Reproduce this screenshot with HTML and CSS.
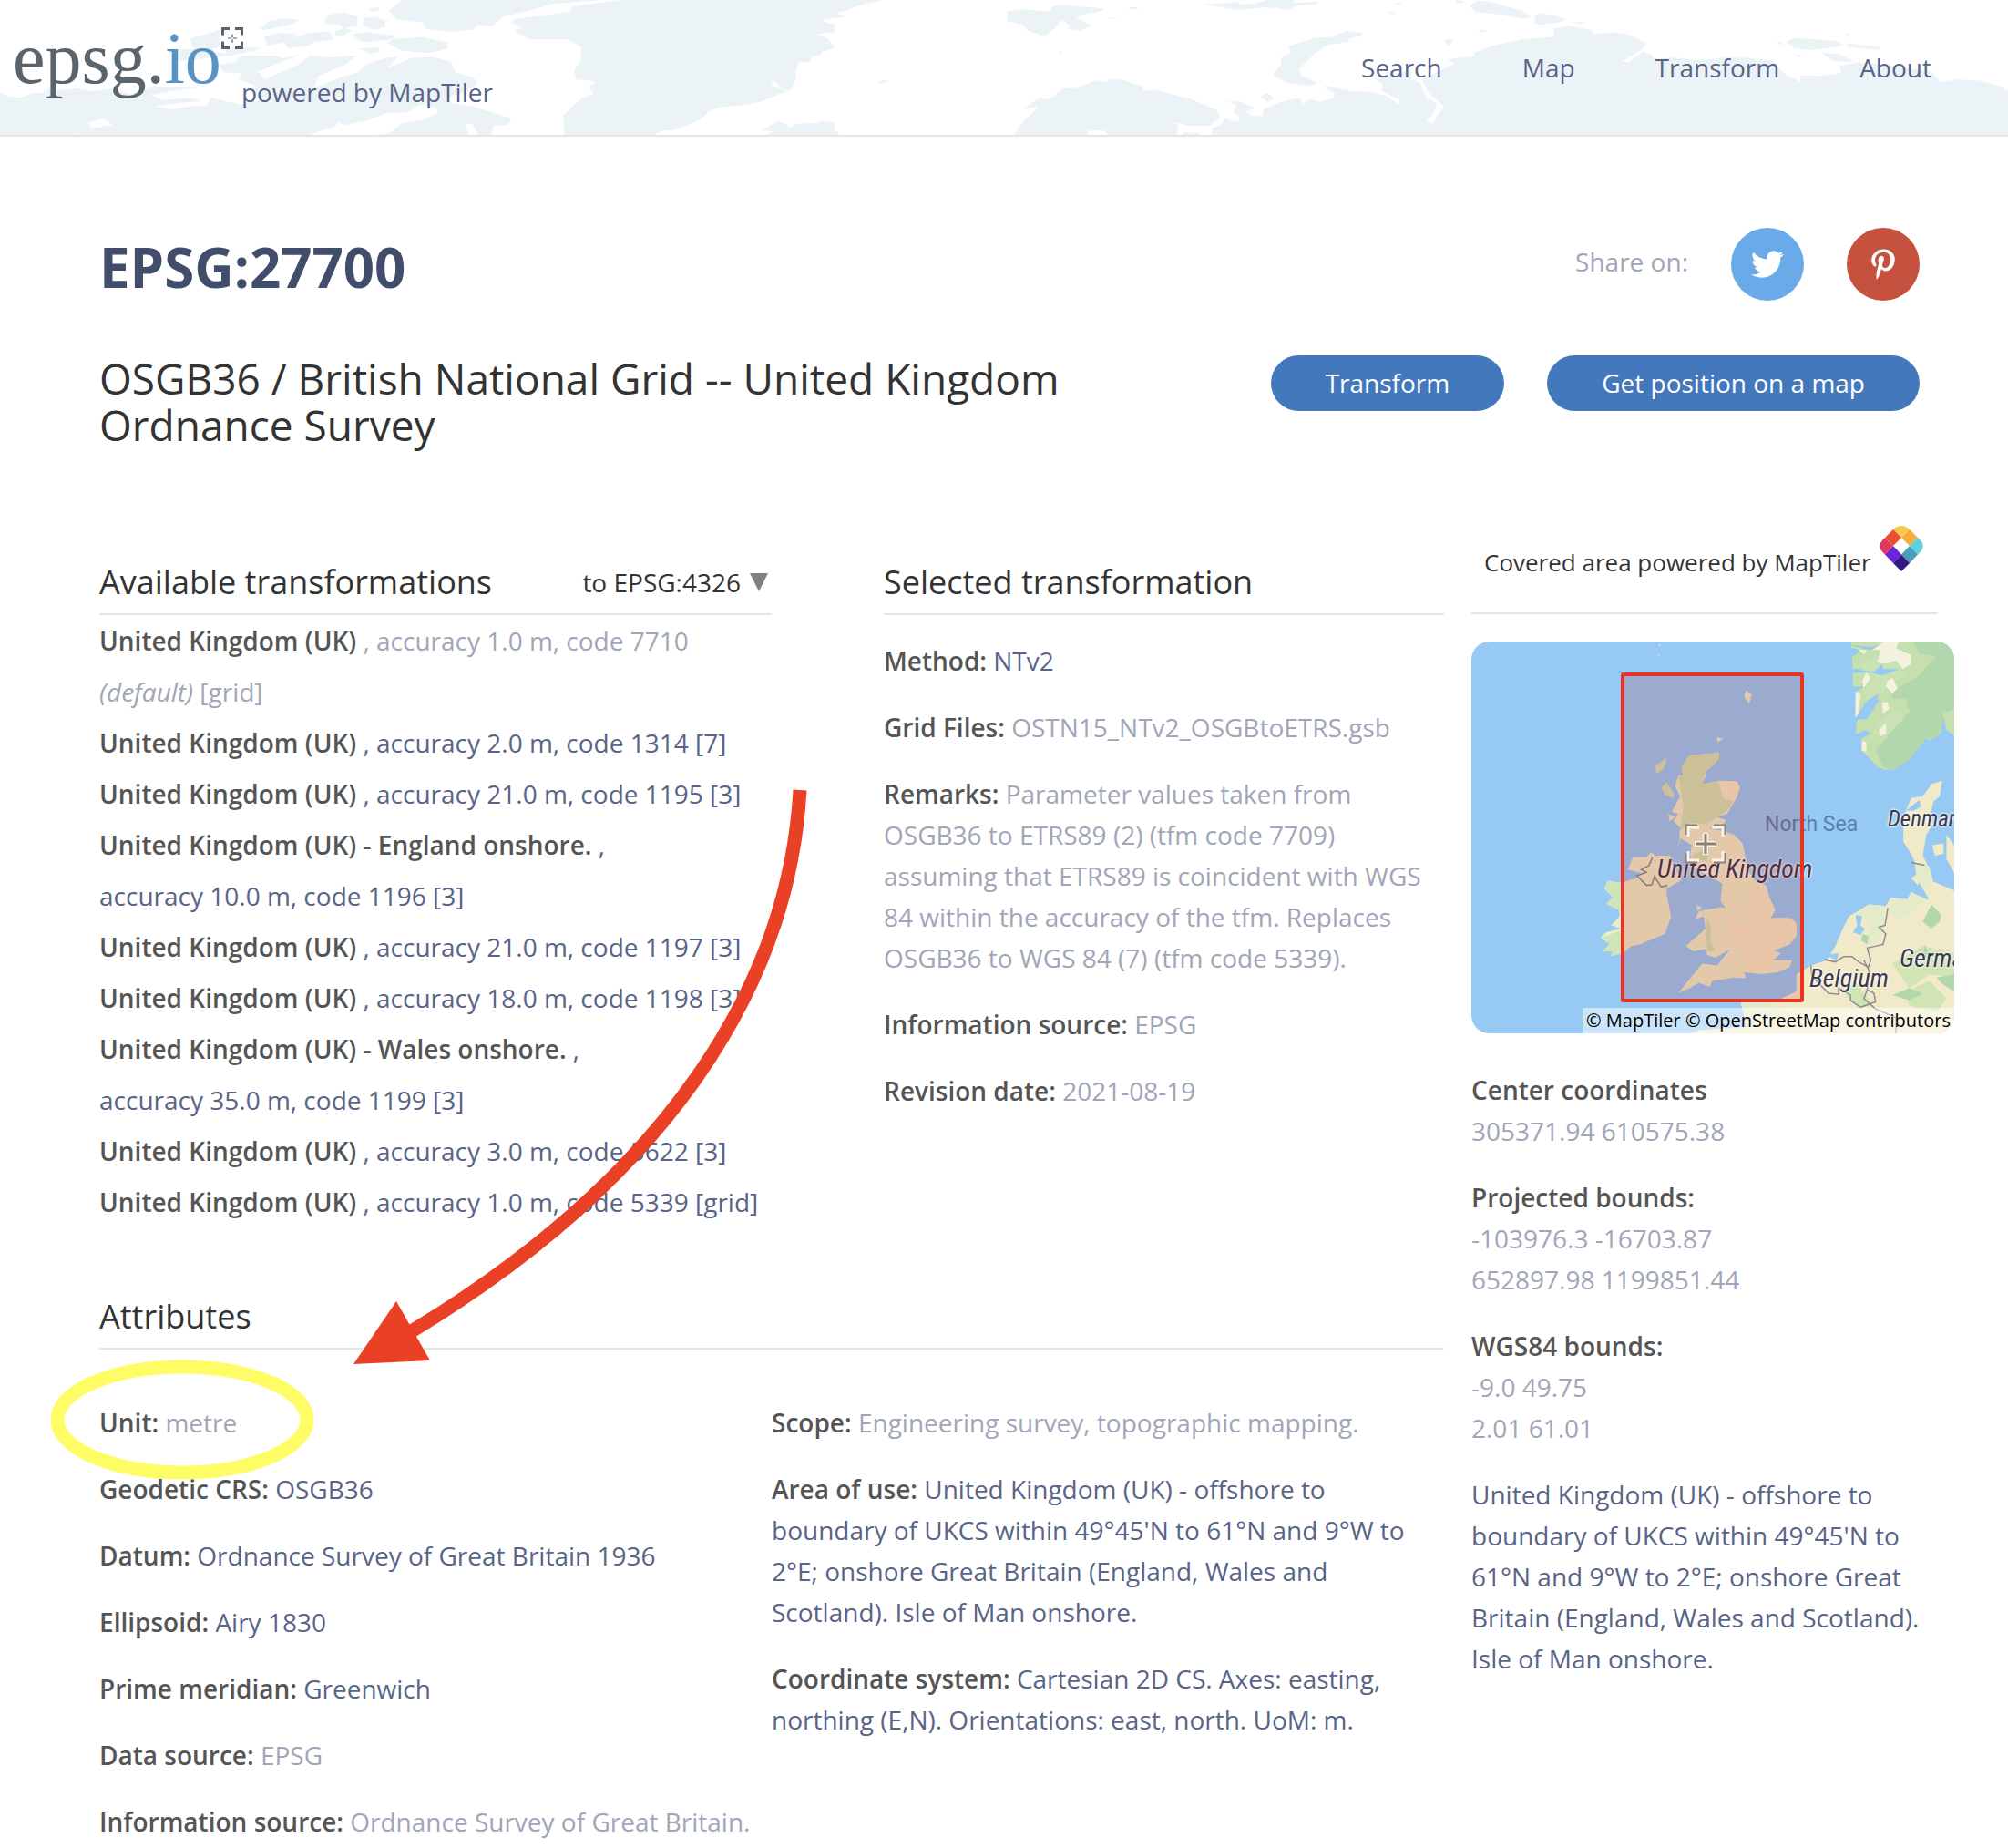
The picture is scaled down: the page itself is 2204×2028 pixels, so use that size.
FILE: index.html
```html
<!DOCTYPE html>
<html lang="en">
<head>
<meta charset="utf-8">
<title>EPSG:27700</title>
<link rel="stylesheet" href="styles.css">
</head>
<body>
<header class="site-header">
  <svg class="header-map" viewBox="0 0 2204 148" preserveAspectRatio="xMidYMid slice" aria-hidden="true">
    <g transform="scale(.472 .3333)">
      <path d="M0 305L22 318 48 322 76 306 100 305 112 290 150 296 180 290 215 300 262 292 300 310 350 288 462 288 400 300 352 312 380 330 440 322 470 332 410 340 360 350 400 360 450 348 480 350 490 320 560 345 600 330 590 280 556 262 560 240 520 238 508 212 545 205 560 184 640 182 655 192 700 180 640 212 600 236 615 262 650 240 690 215 722 182 760 190 832 182 800 215 740 250 730 290 800 250 830 240 850 212 900 190 925 188 900 225 960 190 1010 188 1050 205 1060 240 1100 255 1112 270 1090 300 1040 320 1050 340 1100 350 1190 390 1180 410 1148 415 1142 444 1112 444 1098 405 1084 410 1088 444 868 444 905 438 935 405 980 395 1020 372 1010 352 975 345 950 370 900 372 850 398 800 412 790 402 775 420 722 440 730 444 175 444 215 422 262 410 240 390 205 402 215 425 170 444 0 444Z"/>
      <path d="M935 0L1400 0 1290 12 1240 32 1170 55 1145 85 1110 82 1100 98 1050 105 1020 100 990 95 985 75 955 68 920 65 905 35Z"/>
      <path d="M1568 0L1440 0 1330 22 1325 38 1270 50 1200 62 1190 75 1215 92 1195 100 1230 130 1320 130 1352 155 1350 200 1335 230 1340 262 1385 268 1370 290 1380 310 1350 325 1335 345 1310 380 1312 444 1522 444 1540 430 1568 430Z"/>
      <path d="M605 95L625 70 660 60 698 66 680 78 640 92 615 100ZM755 70L765 48 800 40 832 55 830 85 800 92 790 82 760 78ZM846 60L870 55 895 65 897 88 870 98 845 85ZM858 28L880 24 882 35 862 38ZM615 120L650 108 690 112 680 125 720 108 765 104 776 130 730 138 720 150 670 160 660 140 620 150ZM780 105L800 90 818 100 800 118 778 118ZM820 112L850 105 920 118 915 128 860 138 835 135ZM915 128L985 122 1040 140 1042 160 1000 175 960 172 930 165 900 142ZM440 128L480 112 512 98 512 155 480 165 500 172 530 178 520 160 565 155 610 158 560 178 400 205 400 165 450 160ZM835 160L880 155 885 170 860 178Z"/>
    </g>
    <g transform="translate(740 0) scale(.472 .3333)">
      <path d="M0 0L485 0 430 18 400 35 375 42 395 55 340 68 375 80 372 105 335 112 360 130 372 158 345 170 340 180 322 185 315 205 290 205 282 240 285 255 270 300 248 290 232 262 225 282 262 300 200 335 150 348 108 352 85 362 60 395 0 428Z"/>
      <path d="M205 430L240 398 262 408 268 424 280 408 330 405 345 398 372 403 372 425 386 444 212 444 232 432ZM475 270L492 262 494 270 478 276ZM773 38L810 30 870 38 880 20 910 15 940 22 1000 28 990 38 950 48 935 58 972 85 945 100 915 95 918 82 900 66 885 92 862 120 820 100 812 82 775 70ZM1055 24L1080 23 1075 30 1060 30ZM1010 56L1032 58 1012 62ZM892 168L902 172 897 178ZM1230 14L1290 10 1310 5 1320 15 1350 12 1380 0 1440 0 1440 10 1495 5 1498 12 1450 18 1425 34 1400 26 1370 25 1310 34 1290 28ZM1568 102L1568 138 1520 148 1485 182 1452 228 1460 248 1498 276 1470 282 1420 270 1392 245 1410 215 1412 190 1435 170 1428 152 1490 125 1540 120ZM1513 282L1568 298 1568 330 1540 310 1515 292ZM1362 320L1375 306 1397 320 1380 335Z"/>
      <path d="M790 444L815 395 835 370 845 352 812 358 850 322 870 328 905 290 935 290 980 265 1000 272 1015 262 1040 262 1090 285 1092 300 1118 295 1200 325 1260 360 1270 385 1245 415 1200 415 1150 398 1172 410 1170 444 1010 444 1000 430 965 430 960 444ZM1180 444L1185 436 1220 438 1225 444ZM1250 444L1250 425 1275 405 1280 390 1312 402 1315 385 1300 370 1308 345 1286 333 1320 335 1350 355 1330 368 1345 382 1368 382 1370 360 1410 335 1455 322 1460 342 1480 325 1500 335 1545 318 1568 325 1568 444Z"/>
    </g>
    <g transform="translate(1464 0) scale(.472 .3333)">
      <path d="M0 290L40 300 90 302 120 315 150 342 155 330 110 300 115 280 95 260 180 230 180 262 200 272 215 320 240 340 232 375 215 400 232 405 240 380 256 352 240 328 220 305 205 262 280 210 265 195 330 185 325 175 370 150 440 128 510 122 512 95 545 84 600 100 605 112 650 106 690 115 728 145 715 165 700 178 670 202 685 205 720 170 740 180 745 195 790 190 850 198 910 190 960 190 1020 200 1050 245 1085 270 1085 248 1130 250 1180 240 1175 218 1220 205 1290 215 1390 235 1410 270 1450 262 1500 265 1540 280 1568 298 1568 444 0 444Z"/>
      <path d="M0 118L30 102 65 108 65 118 0 142ZM316 20L335 2 360 5 440 35 458 55 440 62 390 48 330 40ZM468 50L485 42 540 62 530 72 480 82 468 78ZM556 72L582 74 570 80ZM282 0L302 2 300 10 286 8ZM142 8L160 10 148 18ZM122 38L144 40 136 46ZM1052 138L1070 125 1175 135 1182 152 1110 165 1070 158ZM1192 142L1272 155 1268 165 1200 155ZM1030 132L1045 145 1036 148ZM1135 175L1175 178 1212 205 1160 200ZM1068 178L1088 184 1082 190ZM1188 110L1198 112 1194 120ZM338 98L356 98 350 105 338 106ZM256 132L278 130 268 155Z"/>
    </g>
  </svg>
  <a class="brand" href="#">
    <span class="wordmark">epsg.<span class="wordmark-io">io</span></span>
    <span class="brand-side">
      <svg class="focus-icon" viewBox="0 0 24 24" aria-hidden="true">
        <path d="M1.500 8.500V1.500H9M15 1.500h7.500v7M22.500 15.500v7H15M9 22.500H1.500v-7" fill="none" stroke="#5a646c" stroke-width="3"/>
        <path d="M12 7.500v4M12 13v4M7 12h4M13 12h4" stroke="#5a646c" stroke-width="1.200"/>
      </svg>
      <span class="tagline">powered by MapTiler</span>
    </span>
  </a>
  <nav class="nav">
    <a href="#">Search</a>
    <a href="#">Map</a>
    <a href="#">Transform</a>
    <a href="#">About</a>
  </nav>
</header>

<main class="page">
  <div class="title-row">
    <h1>EPSG:27700</h1>
    <div class="share">
      <span class="share-label">Share on:</span>
      <a class="share-link twitter" href="#" aria-label="Twitter">
        <svg width="36" height="36" viewBox="0 0 24 24" fill="#fff"><path d="M23.953 4.570a10 10 0 01-2.825.775 4.958 4.958 0 002.163-2.723c-.951.555-2.005.959-3.127 1.184a4.920 4.920 0 00-8.384 4.482C7.690 8.095 4.067 6.130 1.640 3.162a4.822 4.822 0 00-.666 2.475c0 1.710.870 3.213 2.188 4.096a4.904 4.904 0 01-2.228-.616v.060a4.923 4.923 0 003.946 4.827 4.996 4.996 0 01-2.212.085 4.936 4.936 0 004.604 3.417 9.867 9.867 0 01-6.102 2.105c-.390 0-.779-.023-1.170-.067a13.995 13.995 0 007.557 2.209c9.053 0 13.998-7.496 13.998-13.985 0-.210 0-.420-.015-.630A9.935 9.935 0 0024 4.590z"/></svg>
      </a>
      <a class="share-link pinterest" href="#" aria-label="Pinterest">
        <svg width="26" height="34" viewBox="0 0 384 512" fill="#fff"><path d="M204 6.500C101.400 6.500 0 74.900 0 185.600 0 256 39.600 296 63.600 296c9.900 0 15.600-27.600 15.600-35.400 0-9.300-23.700-29.100-23.700-67.800 0-80.400 61.200-137.400 140.400-137.400 68.100 0 118.500 38.700 118.500 109.800 0 53.100-21.300 152.700-90.300 152.700-24.900 0-46.200-18-46.200-43.800 0-37.800 26.400-74.400 26.400-113.400 0-66.200-93.900-54.200-93.900 25.800 0 16.800 2.100 35.400 9.600 50.700-13.800 59.400-42 147.900-42 209.100 0 18.900 2.700 37.500 4.500 56.400 3.400 3.800 1.700 3.400 6.900 1.500 50.400-69 48.600-82.500 71.400-172.800 12.300 23.400 44.100 36 69.300 36 106.200 0 153.900-103.500 153.900-196.800C384 71.300 298.200 6.500 204 6.500z"/></svg>
      </a>
    </div>
  </div>
  <div class="subtitle-row">
    <h2>OSGB36 / British National Grid -- United Kingdom Ordnance Survey</h2>
    <div class="actions">
      <button class="action" type="button">Transform</button>
      <button class="action" type="button">Get position on a map</button>
    </div>
  </div>

  <div class="columns">
    <div class="details">
      <div class="transformations">
        <section class="available">
          <div class="section-head">
            <h3>Available transformations</h3>
            <button class="target" type="button">to EPSG:4326
              <svg class="caret" viewBox="0 0 20 20" aria-hidden="true"><path d="M0 0h20L10 20Z"/></svg>
            </button>
          </div>
          <ul class="list">
            <li class="muted"><b>United Kingdom (UK)</b> , accuracy 1.0 m, code 7710 <i>(default)</i> [grid]</li>
            <li><a href="#"><b>United Kingdom (UK)</b> , <span>accuracy 2.0 m, code 1314 [7]</span></a></li>
            <li><a href="#"><b>United Kingdom (UK)</b> , <span>accuracy 21.0 m, code 1195 [3]</span></a></li>
            <li><a href="#"><b>United Kingdom (UK) - England onshore.</b> , <span>accuracy 10.0 m, code 1196 [3]</span></a></li>
            <li><a href="#"><b>United Kingdom (UK)</b> , <span>accuracy 21.0 m, code 1197 [3]</span></a></li>
            <li><a href="#"><b>United Kingdom (UK)</b> , <span>accuracy 18.0 m, code 1198 [3]</span></a></li>
            <li><a href="#"><b>United Kingdom (UK) - Wales onshore.</b> , <span>accuracy 35.0 m, code 1199 [3]</span></a></li>
            <li><a href="#"><b>United Kingdom (UK)</b> , <span>accuracy 3.0 m, code 5622 [3]</span></a></li>
            <li><a href="#"><b>United Kingdom (UK)</b> , <span>accuracy 1.0 m, code 5339 [grid]</span></a></li>
          </ul>
        </section>
        <section class="selected">
          <div class="section-head"><h3>Selected transformation</h3></div>
          <div class="facts">
            <p><b>Method:</b> <a href="#">NTv2</a></p>
            <p><b>Grid Files:</b> OSTN15_NTv2_OSGBtoETRS.gsb</p>
            <p><b>Remarks:</b> Parameter values taken from OSGB36 to ETRS89 (2) (tfm code 7709) assuming that ETRS89 is coincident with WGS 84 within the accuracy of the tfm. Replaces OSGB36 to WGS 84 (7) (tfm code 5339).</p>
            <p><b>Information source:</b> EPSG</p>
            <p><b>Revision date:</b> 2021-08-19</p>
          </div>
        </section>
      </div>
      <section class="attributes">
        <div class="section-head"><h3>Attributes</h3></div>
        <div class="attribute-columns">
          <div class="facts">
            <p><b>Unit:</b> metre</p>
            <p><b>Geodetic CRS:</b> <a href="#">OSGB36</a></p>
            <p><b>Datum:</b> <a href="#">Ordnance Survey of Great Britain 1936</a></p>
            <p><b>Ellipsoid:</b> <a href="#">Airy 1830</a></p>
            <p><b>Prime meridian:</b> <a href="#">Greenwich</a></p>
            <p><b>Data source:</b> EPSG</p>
            <p><b>Information source:</b> Ordnance Survey of Great Britain.</p>
          </div>
          <div class="facts usage">
            <p><b>Scope:</b> Engineering survey, topographic mapping.</p>
            <p><b>Area of use:</b> <a href="#">United Kingdom (UK) - offshore to boundary of UKCS within 49°45'N to 61°N and 9°W to 2°E; onshore Great Britain (England, Wales and Scotland). Isle of Man onshore.</a></p>
            <p><b>Coordinate system:</b> <a href="#">Cartesian 2D CS. Axes: easting, northing (E,N). Orientations: east, north. UoM: m.</a></p>
          </div>
        </div>
      </section>
    </div>

    <aside class="coverage">
      <div class="coverage-head">
        <span>Covered area powered by MapTiler</span>
        <svg class="maptiler" viewBox="0 0 48 50" aria-hidden="true">
          <path d="M24 0Q29 0 32.500 3.500L33 4 24 13 15 4 15.500 3.500Q19 0 24 0Z" fill="#f4cb4f"/>
          <path d="M33 4L42 13 33 22 24 13Z" fill="#f6ac3b"/>
          <path d="M42 13L44.500 15.500Q51 22 44.500 29L42 31.500 33 22Z" fill="#5fd0da"/>
          <path d="M33 22L42 31.500 33 41 24 31.500Z" fill="#499ebf"/>
          <path d="M24 31.500L33 41 24 50 15 41Z" fill="#341780"/>
          <path d="M15 22L24 31.500 15 41 6 31.500Z" fill="#6b24d8"/>
          <path d="M6 13L15 22 6 31.500 3.500 29Q-3 22 3.500 15.500Z" fill="#de3860"/>
          <path d="M15 4L24 13 15 22 6 13Z" fill="#e84e2f"/>
        </svg>
      </div>
      <div class="map">
        <svg class="map-layer" viewBox="41 376 1432 1124" preserveAspectRatio="none" aria-hidden="true">
          <path fill="#96c9f4" d="M41 376h1432v1124H41z"/>
          <path fill="#c5dfae" d="M1166 376L1473 376 1473 645 1450 630 1440 590 1432 640 1400 660 1390 652 1340 715 1290 745 1265 744 1245 735 1200 690 1198 655 1225 640 1210 630 1180 642 1185 600 1215 598 1250 545 1240 535 1200 590 1180 585 1182 520 1205 505 1172 505 1172 465 1205 455 1172 455 1170 420 1200 400 1168 395Z"/>
          <path fill="#b2d7ac" d="M1350 376L1473 376 1473 570 1440 580 1440 600 1425 650 1400 655 1390 652 1340 715 1290 745 1265 738 1240 690 1275 650 1290 600 1340 580 1330 540 1290 540 1285 520 1360 480 1390 450 1420 420 1370 410Z"/>
          <path fill="#cbe3b4" d="M1190 440L1250 420 1300 440 1330 470 1280 500 1225 560 1200 520 1235 480ZM1260 600L1300 570 1330 590 1270 650 1230 640Z"/>
          <path fill="#f5f1df" d="M1265 376L1310 376 1300 395 1345 415 1345 440 1320 455 1300 430 1270 440 1245 435 1255 400 1230 400ZM1275 490L1290 480 1305 510 1290 525 1270 505ZM1258 550L1275 550 1280 570 1262 582ZM1250 630L1270 610 1270 640 1255 648ZM1180 520L1195 525 1190 585 1180 595ZM1200 660L1213 665 1212 692 1198 690ZM1212 465L1225 480 1205 510 1200 490ZM1187 398L1215 402 1205 412Z"/>
          <path fill="#96c9f4" d="M1172 458L1235 462 1260 440 1262 455 1310 455 1260 474 1220 464 1172 466ZM1180 595L1215 545 1250 525 1240 545 1205 595ZM1165 387L1230 392 1252 385 1225 400Z"/>
          <path fill="#f1eac8" d="M1437 775L1430 820 1412 835 1402 870 1410 900 1390 930 1380 990 1395 1020 1400 1060 1473 1090 1473 1500 860 1500 840 1412 935 1412 1005 1380 1005 1330 1048 1305 1095 1290 1120 1250 1140 1205 1160 1165 1220 1130 1270 1135 1285 1110 1325 1130 1345 1095 1395 1118 1370 1080 1345 1055 1360 1045 1355 1005 1345 985 1322 950 1322 900 1330 860 1345 825 1380 820 1405 785ZM1408 960L1440 955 1442 985 1415 990ZM1450 930L1473 960 1473 1040 1450 1000ZM690 1500L720 1490 850 1482 900 1500Z"/>
          <path fill="#e3ebc8" d="M1185 1160L1220 1130 1270 1135 1270 1180 1250 1230 1220 1260 1215 1220 1225 1190ZM1285 1110L1340 1115 1345 1095 1395 1118 1360 1140 1310 1180 1290 1160ZM840 1412L935 1412 960 1440 1000 1440 900 1460 860 1480ZM1360 1010L1398 1020 1410 1060 1395 1090 1360 1060Z"/>
          <path fill="#d0e4b4" d="M1130 1370L1180 1350 1230 1420 1190 1425ZM1290 1300L1380 1250 1473 1270 1473 1340 1400 1330 1340 1370 1310 1330ZM1330 1380L1400 1350 1450 1400 1420 1440 1340 1420Z"/>
          <path fill="#b2d7ac" d="M1380 1180L1405 1130 1435 1160 1430 1180 1405 1200ZM1385 1245L1400 1280 1380 1290ZM1290 1390L1340 1370 1380 1385 1340 1405ZM1420 1340L1473 1330 1473 1380 1440 1360ZM1200 1215L1220 1220 1215 1245 1198 1235Z"/>
          <path fill="#96c9f4" d="M1180 1160L1200 1165 1195 1190 1208 1200 1195 1218 1172 1210 1185 1190ZM1330 860L1370 830 1375 850 1350 862ZM1090 1275L1130 1270 1125 1290ZM1368 1066L1398 1115 1360 1100Z"/>
          <path fill="#ebecc8" d="M685 703L715 700 775 695 775 715 735 750 735 765 725 785 775 775 828 777 837 793 830 820 800 870 770 880 795 888 790 900 745 912 790 920 820 930 845 955 855 1000 860 1030 880 1060 915 1075 925 1110 895 1105 920 1115 942 1145 928 1170 955 1168 990 1170 1005 1185 1005 1220 985 1245 938 1262 960 1270 935 1290 992 1290 985 1310 950 1325 900 1330 850 1325 855 1342 820 1340 755 1350 748 1367 715 1355 690 1370 655 1384 700 1330 725 1300 770 1305 808 1258 765 1283 740 1275 735 1258 700 1265 677 1250 735 1200 730 1165 705 1172 715 1150 780 1138 795 1140 780 1120 785 1070 700 1025 690 985 695 960 660 940 655 970 660 910 640 890 655 870 635 865 660 820 645 790 655 760 668 760 665 735 685 725ZM505 1030L520 995 560 995 575 980 585 990 630 990 640 1020 665 1060 620 1085 620 1100 633 1165 615 1215 595 1222 540 1245 515 1250 490 1270 455 1278 460 1265 430 1265 450 1245 425 1225 440 1210 485 1200 455 1190 480 1165 480 1140 440 1128 460 1110 435 1085 445 1062 485 1068 530 1055 545 1040ZM585 735L620 710 612 740 590 755ZM605 795L620 780 640 810 640 825 615 815ZM625 870L645 880 628 892ZM850 535L855 515 873 528 865 555ZM768 650L788 655 772 665ZM708 1132L726 1138 712 1150ZM597 385h5v5h-5zM597 412l4 8-5-2z"/>
          <path fill="#cfe5b8" d="M445 1062L484 1070 484 1150 440 1128 460 1110 435 1085ZM430 1225L484 1205 484 1272 455 1278 460 1265 430 1265 450 1245Z"/>
          <path fill="#d0e2b3" d="M685 703L775 695 775 715 735 750 725 785 775 777 785 820 818 835 800 860 740 900 690 895 660 920 655 970 660 910 670 850 665 820 655 760 668 760 665 735ZM740 1165L752 1200 750 1235 765 1265 740 1265 735 1220ZM585 735L620 710 612 740 590 755ZM605 795L620 780 640 810 640 825 615 815ZM700 985L745 970 740 1005 690 1000Z"/>
          <path fill="#f5e8c5" d="M775 775L828 777 837 793 820 835 790 825ZM790 1180L850 1190 870 1090 900 1080 925 1110 942 1145 928 1170 990 1170 1005 1185 1005 1220 938 1262 935 1290 900 1330 860 1320 840 1260 810 1230Z"/>
          <path fill="none" stroke="#8d8b92" stroke-width="4" d="M578 995L568 1018 545 1030 560 1038 532 1048 560 1075 576 1074 584 1050 604 1080 622 1075M1276 1140L1268 1190 1250 1195 1270 1215 1262 1245 1230 1252 1215 1255 1225 1290 1218 1310 1190 1295 1170 1280 1145 1280 1120 1295 1088 1288M1205 1290L1220 1320 1215 1375M1048 1305L1050 1335 1100 1385 1130 1388 1130 1370 1165 1390 1165 1405 1195 1425 1240 1410 1235 1385 1215 1375 1205 1400 1240 1430 1300 1455 1300 1500M1345 1010L1385 1018"/>
        </svg>
        <span class="map-label sea">North Sea</span>
        <span class="map-label uk">United Kingdom</span>
        <span class="map-label denmark">Denmark</span>
        <span class="map-label germany">Germany</span>
        <span class="map-label belgium">Belgium</span>
        <svg class="map-layer" viewBox="0 0 530 430" preserveAspectRatio="none" aria-hidden="true">
          <rect x="166" y="36" width="197" height="358" rx="1" fill="#b40000" fill-opacity=".15" stroke="#e93323" stroke-width="4"/>
          <g fill="none">
            <path stroke="#fff" stroke-opacity=".8" stroke-width="6" d="M257 210v24M245 222h24"/>
            <path stroke="#8a8178" stroke-width="3" d="M257 211v22M246 222h22"/>
            <path stroke="#8a8178" stroke-width="3" d="M236 212v-10h12M266 202h12v10M278 232v10h-12M248 242h-12v-10"/>
            <path stroke="#fbf3e6" stroke-width="3" d="M238 214v-10h12M264 204h12v10M276 230v10h-12M250 240h-12v-10"/>
          </g>
        </svg>
        <div class="attribution"><a href="#">© MapTiler</a> <a href="#">© OpenStreetMap contributors</a></div>
      </div>
      <div class="facts">
        <p><b>Center coordinates</b><br>305371.94 610575.38</p>
        <p><b>Projected bounds:</b><br>-103976.3 -16703.87<br>652897.98 1199851.44</p>
        <p><b>WGS84 bounds:</b><br>-9.0 49.75<br>2.01 61.01</p>
        <p><a href="#">United Kingdom (UK) - offshore to boundary of UKCS within 49°45'N to 61°N and 9°W to 2°E; onshore Great Britain (England, Wales and Scotland). Isle of Man onshore.</a></p>
      </div>
    </aside>
  </div>
</main>
<svg class="annotation" width="900" height="1640" viewBox="0 0 900 1640" aria-hidden="true">
  <ellipse cx="200" cy="1558" rx="137" ry="58" fill="none" stroke="#fffd66" stroke-width="15"/>
  <path d="M878 867C866 1080 735 1290 450 1462" fill="none" stroke="#ea4025" stroke-width="15"/>
  <path d="M388 1497L435 1428 472 1493Z" fill="#ea4025"/>
</svg>
</body>
</html>
```
FILE: styles.css
```css
* { box-sizing: border-box; }
body {
  margin: 0;
  position: relative;
  background: #fff;
  color: #a0a6b8;
  font: 28px/45px "Open Sans", "Noto Sans", sans-serif;
}
h1, h2, h3, p, ul { margin: 0; padding: 0; }
h2, h3 { font-weight: 400; color: #333; }
a { color: #586488; text-decoration: none; }
b { font-weight: 600; color: #555; }
button { border: 0; font: inherit; cursor: pointer; }

.site-header {
  position: relative;
  display: flex;
  justify-content: space-between;
  min-height: 150px;
  border-bottom: 2px solid #e5e5e5;
}
.header-map {
  position: absolute;
  inset: 0;
  width: 100%;
  height: 148px;
  fill: #ecf3f7;
}
.brand { position: relative; display: flex; padding-left: 14px; }
.wordmark {
  padding-top: 24px;
  font: 80px/80px "Liberation Serif", serif;
  color: #5a646c;
}
.wordmark-io { color: #5794c5; }
.brand-side { display: flex; flex-direction: column; gap: 25px; padding-top: 30px; }
.focus-icon { width: 24px; height: 24px; }
.tagline { padding-left: 22px; }
.nav {
  position: relative;
  display: flex;
  align-items: center;
  gap: 88px;
  padding-right: 84px;
}

.page { padding: 100px 77px 0 109px; }
.title-row, .subtitle-row { display: flex; justify-content: space-between; padding-right: 20px; }
h1 { font-size: 60px; line-height: 86px; font-weight: 700; color: #414d6b; }
.share { display: flex; gap: 47px; }
.share-label { padding-top: 15px; }
.share-link {
  display: flex;
  align-items: center;
  justify-content: center;
  width: 80px;
  height: 80px;
  border-radius: 50%;
}
.twitter { background: #6aaae8; }
.pinterest { background: #c4523f; }
.subtitle-row { padding-top: 54px; align-items: flex-start; }
h2 { max-width: 1100px; font-size: 46px; line-height: 51px; }
.actions { display: flex; gap: 47px; }
.action {
  padding: 8px 60px;
  border-radius: 31px;
  background: #4478bd;
  color: #fff;
}

.columns {
  display: grid;
  grid-template-columns: 1476fr 512fr;
  gap: 30px;
  padding-top: 84px;
}
.details { padding-top: 37px; }
.transformations {
  display: grid;
  grid-template-columns: 738fr 615fr;
  gap: 123px;
}
.section-head {
  display: flex;
  justify-content: space-between;
  align-items: center;
  padding-bottom: 8px;
  border-bottom: 2px solid #e5e5e5;
}
h3 { font-size: 36px; line-height: 52px; }
.target {
  display: flex;
  align-items: center;
  gap: 10px;
  padding: 0 4px 0 0;
  background: none;
  color: #333;
  line-height: 36px;
}
.caret { width: 20px; height: 20px; fill: #808080; }
.list { list-style: none; line-height: 56px; }
.list span { display: inline-block; }
.facts { display: grid; gap: 28px; align-content: start; }
.selected .facts { padding-top: 28px; }
.attributes { padding-top: 72px; }
.attribute-columns { display: grid; grid-template-columns: 1fr 1fr; padding-top: 58px; }
.usage { padding-right: 32px; }

.coverage-head {
  display: flex;
  align-items: baseline;
  gap: 9px;
  padding: 1px 0 37px 14px;
  border-bottom: 2px solid #e5e5e5;
  color: #333;
  font-size: 26px;
  line-height: 36px;
  white-space: nowrap;
}
.maptiler { width: 48px; height: 50px; flex: none; }
.map {
  position: relative;
  height: 430px;
  margin: 30px -18px 40px 0;
  border-radius: 20px;
  overflow: hidden;
}
.map-layer { position: absolute; inset: 0; width: 100%; height: 100%; }
.map-label {
  position: absolute;
  font: italic 400 28px/32px "Roboto Condensed", Roboto, sans-serif;
  color: #3a3a4e;
  text-shadow: 0 0 3px #fff, 0 0 3px #fff;
  white-space: nowrap;
}
.sea { left: 322px; top: 185px; font: 400 23px/32px Roboto, sans-serif; color: #5b80b0; text-shadow: none; }
.uk { left: 204px; top: 234px; }
.denmark { left: 457px; top: 179px; font-size: 25px; }
.germany { left: 470px; top: 332px; }
.belgium { left: 371px; top: 354px; }
.attribution {
  position: absolute;
  right: 0;
  bottom: 0;
  padding: 0 4px;
  background: rgba(255, 255, 255, .5);
  font-size: 20px;
  line-height: 28px;
}
.attribution a { color: #000; }

.annotation { position: absolute; left: 0; top: 0; pointer-events: none; }
```
